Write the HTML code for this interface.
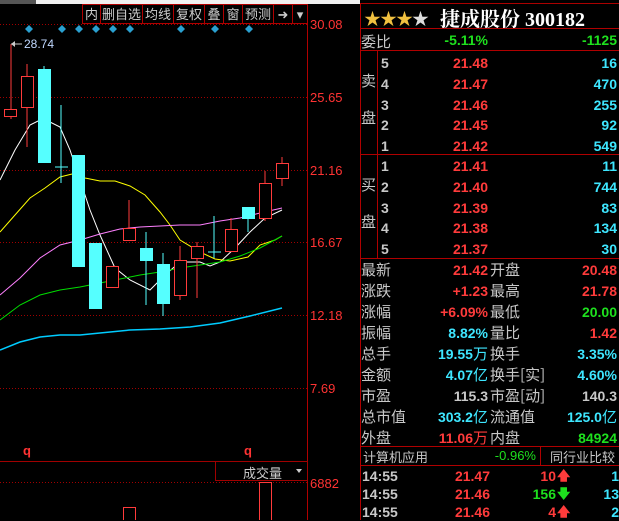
<!DOCTYPE html>
<html><head><meta charset="utf-8"><style>
*{margin:0;padding:0;box-sizing:border-box}
body{width:619px;height:520px;background:#000;position:relative;overflow:hidden;font-family:"Liberation Sans","Noto Sans CJK SC",sans-serif}
.a{position:absolute;white-space:nowrap}
.cn{font-family:"WenQuanYi Zen Hei","Noto Sans CJK SC",sans-serif;font-size:15px;color:#c8c8c8}
.n{font-family:"Liberation Sans",sans-serif;font-weight:bold;font-size:14px}
.r{color:#ff3b3b}.g{color:#1ee01e}.c{color:#3ee6ff}.w{color:#c8c8c8}
.ax{font-family:"Liberation Sans",sans-serif;font-size:13px;color:#ff3333}
</style></head><body>
<div class="a" style="left:0;top:0;width:360px;height:4px;background:#f0f0f0"></div>
<div class="a" style="left:0;top:0;width:36px;height:4px;background:#555"></div>
<div class="a" style="left:360px;top:0;width:259px;height:4px;background:#000;border-bottom:1px solid #a00"></div>

<svg class="a" style="left:0;top:0" width="360" height="520">
<g stroke="#a00000" stroke-dasharray="1,2" stroke-width="1">
<line x1="0" y1="24.5" x2="307" y2="24.5"/><line x1="0" y1="97.5" x2="307" y2="97.5"/><line x1="0" y1="170.5" x2="307" y2="170.5"/><line x1="0" y1="242.5" x2="307" y2="242.5"/><line x1="0" y1="315.5" x2="307" y2="315.5"/><line x1="0" y1="388.5" x2="307" y2="388.5"/><line x1="0" y1="482.5" x2="307" y2="482.5"/>
</g>
<line x1="307.5" y1="4" x2="307.5" y2="520" stroke="#b00000"/>
<line x1="0" y1="461.5" x2="307" y2="461.5" stroke="#a00000"/>
<rect x="215.5" y="461.5" width="92" height="19" fill="none" stroke="#a00000"/>
<g fill="#2aa0d0">
<path d="M29 25l4 4-4 4-4-4z"/><path d="M62 25l4 4-4 4-4-4z"/><path d="M79 25l4 4-4 4-4-4z"/><path d="M96 25l4 4-4 4-4-4z"/><path d="M113 25l4 4-4 4-4-4z"/><path d="M130 25l4 4-4 4-4-4z"/><path d="M181 25l4 4-4 4-4-4z"/><path d="M215 25l4 4-4 4-4-4z"/><path d="M249 25l4 4-4 4-4-4z"/>
</g>
<line x1="11" y1="44" x2="11" y2="110" stroke="#ff3b3b"/>
<line x1="11" y1="44" x2="22" y2="44" stroke="#ccc"/><path d="M11 44l4-3v6z" fill="#ccc"/>
<polyline fill="none" stroke="#fff" stroke-width="1" points="0,180 15,150 30,125 40,120 50,122 60,127 70,150 80,180 90,210 100,235 115,268 130,280 150,290 165,275 180,262 200,262 210,266 220,262 235,248 250,232 265,218 282,210"/>
<polyline fill="none" stroke="#ffff00" points="0,232 15,215 30,198 45,188 60,177 72,174 85,178 100,181 115,181 130,186 145,195 160,212 170,225 180,240 200,252 215,259 230,261 248,257 260,245 275,240 282,236"/>
<polyline fill="none" stroke="#ff80ff" points="0,295 20,278 40,258 60,245 80,240 100,234 120,229 140,227 160,226 180,225 200,225 220,221 240,218 260,213 282,208"/>
<polyline fill="none" stroke="#00dd00" points="0,320 20,305 40,295 60,290 80,287 100,283 120,279 140,275 160,272 180,268 200,265 220,262 240,256 260,248 282,236"/>
<polyline fill="none" stroke="#00ccff" stroke-width="1.5" points="0,350 20,342 40,337 60,335 80,335 100,333 130,330 160,329 190,327 220,323 250,316 282,308"/>
<g stroke="#ff3b3b" fill="none" stroke-width="1">
<rect x="4.5" y="109.5" width="12" height="7"/><line x1="11" y1="117" x2="11" y2="119"/>
<line x1="27" y1="64" x2="27" y2="147"/><rect x="21.5" y="76.5" width="12" height="31" fill="#000"/>
<line x1="112" y1="266" x2="112" y2="288"/><rect x="106.5" y="266.5" width="12" height="21" fill="#000"/>
<line x1="129" y1="200" x2="129" y2="240"/><rect x="123.5" y="228.5" width="12" height="12" fill="#000"/>
<line x1="180" y1="246" x2="180" y2="300"/><rect x="174.5" y="260.5" width="12" height="35" fill="#000"/>
<line x1="197" y1="242" x2="197" y2="298"/><rect x="191.5" y="246.5" width="12" height="12" fill="#000"/>
<line x1="231" y1="218" x2="231" y2="252"/><rect x="225.5" y="229.5" width="12" height="22" fill="#000"/>
<line x1="265" y1="171" x2="265" y2="221"/><rect x="259.5" y="183.5" width="12" height="35" fill="#000"/>
<line x1="282" y1="157" x2="282" y2="186"/><rect x="276.5" y="163.5" width="12" height="15" fill="#000"/>
<rect x="123.5" y="507.5" width="12" height="14"/><rect x="259.5" y="482.5" width="12" height="40"/>
</g>
<g fill="#55ffff" stroke="#55ffff">
<rect x="38" y="69" width="13" height="94" stroke="none"/><line x1="44" y1="66" x2="44" y2="69"/>
<line x1="61" y1="105" x2="61" y2="183"/><line x1="55" y1="167" x2="68" y2="167"/>
<rect x="72" y="155" width="13" height="112" stroke="none"/>
<rect x="89" y="243" width="13" height="66" stroke="none"/>
<line x1="146" y1="232" x2="146" y2="305"/><rect x="140" y="248" width="13" height="13" stroke="none"/>
<line x1="163" y1="253" x2="163" y2="316"/><rect x="157" y="264" width="13" height="40" stroke="none"/>
<line x1="214" y1="216" x2="214" y2="258"/><line x1="208" y1="252" x2="221" y2="252"/>
<line x1="248" y1="218" x2="248" y2="232"/><rect x="242" y="207" width="13" height="12" stroke="none"/>
</g>
<path d="M296 469h6l-3 4z" fill="#ccc"/>
</svg>
<div class="a" style="left:82px;top:4px;width:226px;height:20px;border:1px solid #b00000;display:flex;font-family:'WenQuanYi Zen Hei','Noto Sans CJK SC',sans-serif;font-size:13px;color:#ccc;line-height:18px">
<span style="width:18px;text-align:center;border-right:1px solid #b00000">内</span><span style="width:42px;text-align:center;border-right:1px solid #b00000">删自选</span><span style="width:31px;text-align:center;border-right:1px solid #b00000">均线</span><span style="width:31px;text-align:center;border-right:1px solid #b00000">复权</span><span style="width:19px;text-align:center;border-right:1px solid #b00000">叠</span><span style="width:19px;text-align:center;border-right:1px solid #b00000">窗</span><span style="width:31px;text-align:center;border-right:1px solid #b00000">预测</span><span style="width:19px;text-align:center;border-right:1px solid #b00000">➜</span><span style="width:14px;text-align:center">▾</span></div>
<div class="a" style="left:24px;top:37px;font-size:12px;color:#c0d8ff">28.74</div>
<div class="a ax" style="left:310px;top:17px">30.08</div>
<div class="a ax" style="left:310px;top:90px">25.65</div>
<div class="a ax" style="left:310px;top:163px">21.16</div>
<div class="a ax" style="left:310px;top:235px">16.67</div>
<div class="a ax" style="left:310px;top:308px">12.18</div>
<div class="a ax" style="left:310px;top:381px">7.69</div>
<div class="a ax" style="left:310px;top:476px">6882</div>
<div class="a" style="left:23px;top:443px;color:#ff3333;font-weight:bold;font-size:13px">q</div>
<div class="a" style="left:244px;top:443px;color:#ff3333;font-weight:bold;font-size:13px">q</div>
<div class="a" style="left:243px;top:463px;font-family:'WenQuanYi Zen Hei','Noto Sans CJK SC',sans-serif;font-size:13px;color:#ccc">成交量</div>

<!-- right panel -->
<div class="a" style="left:360px;top:4px;width:1px;height:516px;background:#b00000"></div>
<div class="a" style="left:364px;top:5px;font-size:17px;color:#f0c040;letter-spacing:-1px">★★★<span style="color:#ddd">★</span></div>
<div class="a" style="left:440px;top:3px;font-family:'Liberation Serif','Noto Serif CJK SC',serif;font-weight:bold;font-size:20px;color:#fff">捷成股份 300182</div>
<div class="a" style="left:360px;top:28px;width:259px;height:1px;background:#b00000"></div>
<div class="a cn" style="left:361px;top:31px">委比</div>
<div class="a n g" style="left:430px;top:32px;width:58px;text-align:right">-5.11%</div>
<div class="a n g" style="left:540px;top:32px;width:77px;text-align:right">-1125</div>
<div class="a" style="left:360px;top:50px;width:259px;height:1px;background:#b00000"></div>
<div class="a" style="left:360px;top:154px;width:259px;height:1px;background:#b00000"></div>
<div class="a" style="left:377px;top:50px;width:1px;height:208px;background:#b00000"></div>
<div class="a" style="left:360px;top:258px;width:259px;height:1px;background:#b00000"></div>
<div class="a cn" style="left:361px;top:62px;line-height:37px;width:16px;white-space:normal">卖盘</div>
<div class="a cn" style="left:361px;top:166px;line-height:37px;width:16px;white-space:normal">买盘</div>
<div class="a n w" style="left:381px;top:53px;line-height:20.8px">5<br>4<br>3<br>2<br>1</div>
<div class="a n r" style="left:420px;top:53px;line-height:20.8px;width:68px;text-align:right">21.48<br>21.47<br>21.46<br>21.45<br>21.42</div>
<div class="a n c" style="left:540px;top:53px;line-height:20.8px;width:77px;text-align:right">16<br>470<br>255<br>92<br>549</div>
<div class="a n w" style="left:381px;top:156px;line-height:20.8px">1<br>2<br>3<br>4<br>5</div>
<div class="a n r" style="left:420px;top:156px;line-height:20.8px;width:68px;text-align:right">21.41<br>21.40<br>21.39<br>21.38<br>21.37</div>
<div class="a n c" style="left:540px;top:156px;line-height:20.8px;width:77px;text-align:right">11<br>744<br>83<br>134<br>30</div>

<div class="a cn" style="left:361px;top:259px;line-height:21px">最新<br>涨跌<br>涨幅<br>振幅<br>总手<br>金额<br>市盈<br>总市值<br>外盘</div>
<div class="a n" style="left:400px;top:260px;line-height:21px;width:88px;text-align:right"><span class="r">21.42</span><br><span class="r">+1.23</span><br><span class="r">+6.09%</span><br><span class="c">8.82%</span><br><span class="c">19.55<span style="font-weight:normal;font-size:15px">万</span></span><br><span class="c">4.07<span style="font-weight:normal;font-size:15px">亿</span></span><br><span class="w">115.3</span><br><span class="c">303.2<span style="font-weight:normal;font-size:15px">亿</span></span><br><span class="r">11.06<span style="font-weight:normal;font-size:15px">万</span></span></div>
<div class="a cn" style="left:490px;top:259px;line-height:21px">开盘<br>最高<br>最低<br>量比<br>换手<br>换手[实]<br>市盈[动]<br>流通值<br>内盘</div>
<div class="a n" style="left:530px;top:260px;line-height:21px;width:87px;text-align:right"><span class="r">20.48</span><br><span class="r">21.78</span><br><span class="g">20.00</span><br><span class="r">1.42</span><br><span class="c">3.35%</span><br><span class="c">4.60%</span><br><span class="w">140.3</span><br><span class="c">125.0<span style="font-weight:normal;font-size:15px">亿</span></span><br><span class="g">84924</span></div>
<div class="a" style="left:360px;top:446px;width:259px;height:1px;background:#b00000"></div>
<div class="a" style="left:360px;top:465px;width:259px;height:1px;background:#b00000"></div>
<div class="a" style="left:540px;top:446px;width:1px;height:19px;background:#b00000"></div>
<div class="a cn" style="left:363px;top:447px;font-size:13px">计算机应用</div>
<div class="a g" style="left:480px;top:448px;width:56px;text-align:right;font-size:13px">-0.96%</div>
<div class="a cn" style="left:550px;top:447px;font-size:13px">同行业比较</div>
<div class="a n w" style="left:362px;top:467px;line-height:18px">14:55<br>14:55<br>14:55</div>
<div class="a n r" style="left:420px;top:467px;line-height:18px;width:70px;text-align:right">21.47<br>21.46<br>21.46</div>
<div class="a n" style="left:500px;top:467px;line-height:18px;width:56px;text-align:right"><span class="r">10</span><br><span class="g">156</span><br><span class="r">4</span></div>
<div class="a n" style="left:557px;top:467px;line-height:18px;font-size:13px"><span class="r">🡅</span><br><span class="g">🡇</span><br><span class="r">🡅</span></div>
<div class="a n c" style="left:580px;top:467px;line-height:18px;width:39px;text-align:right">1<br>13<br>2</div>
</body></html>
